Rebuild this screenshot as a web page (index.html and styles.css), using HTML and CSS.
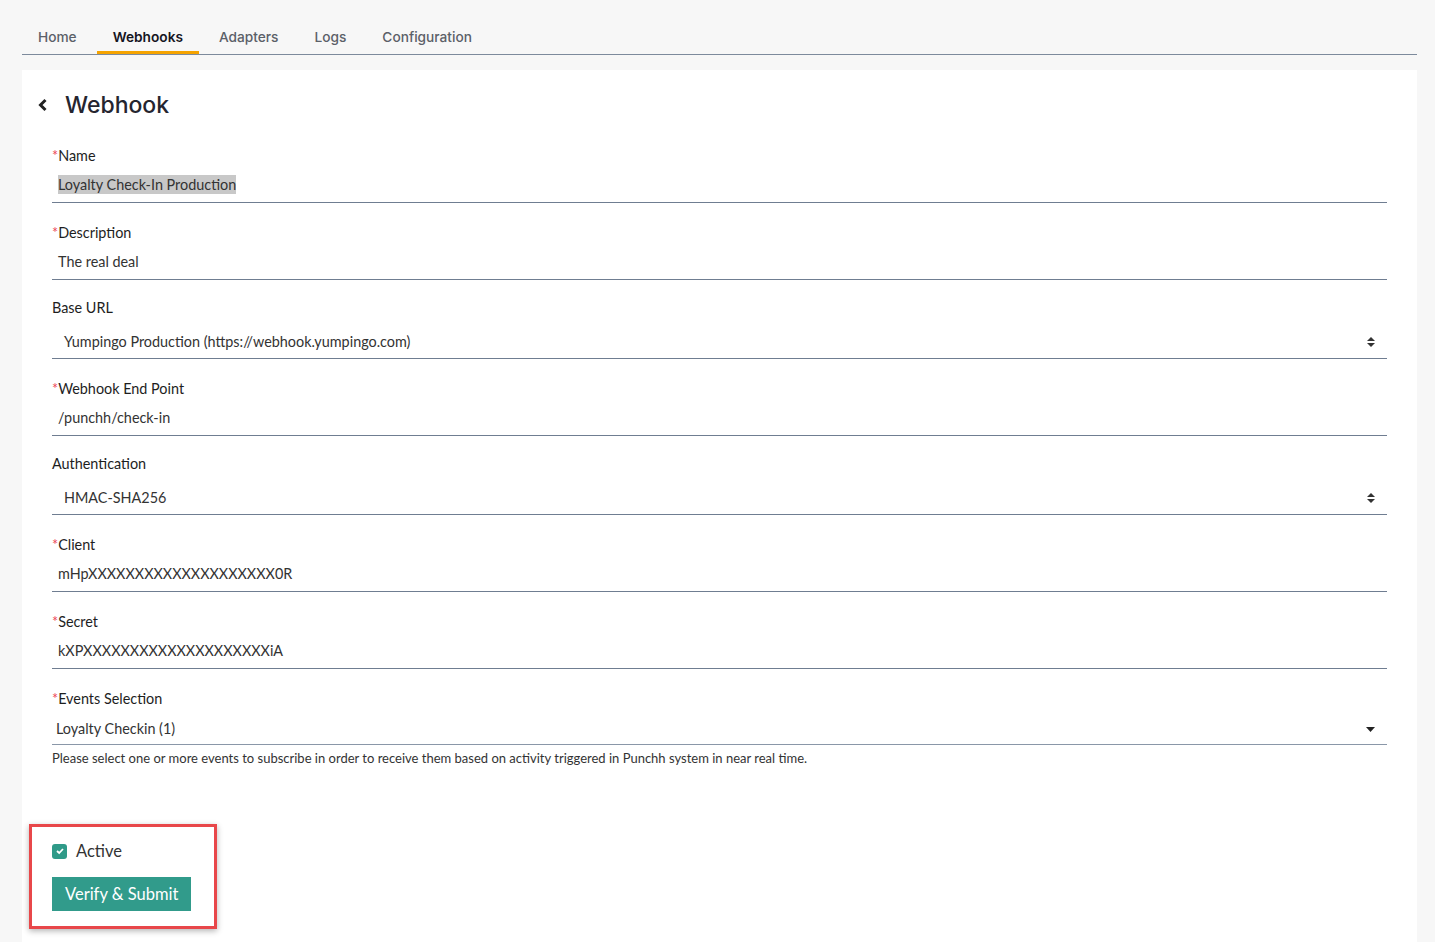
FILE: index.html
```html
<!DOCTYPE html>
<html lang="en">
<head>
    <meta charset="UTF-8">
    <meta name="viewport" content="width=device-width, initial-scale=1.0">
    <title>Webhook</title>
    <link rel="stylesheet" href="styles.css">
</head>
<body>
    <nav class="tabs">
        <a class="tab">Home</a>
        <a class="tab active">Webhooks</a>
        <a class="tab">Adapters</a>
        <a class="tab">Logs</a>
        <a class="tab">Configuration</a>
    </nav>

    <div class="card">
        <div class="page-title">
            <svg class="back" width="10" height="14" viewBox="0 0 10 14">
                <polyline points="7.5,2 2.5,7 7.5,12" fill="none" stroke="#222" stroke-width="3"/>
            </svg>
            <h1>Webhook</h1>
        </div>

        <div class="field">
            <label><span class="req">*</span>Name</label>
            <div class="input"><span class="selected">Loyalty Check-In Production</span></div>
        </div>

        <div class="field">
            <label><span class="req">*</span>Description</label>
            <div class="input">The real deal</div>
        </div>

        <div class="field select-field">
            <label>Base URL</label>
            <div class="select">
                <span>Yumpingo Production (https://webhook.yumpingo.com)</span>
                <svg width="8" height="10" viewBox="0 0 8 10"><path d="M4 0L8 4H0Z M4 10L8 6H0Z" fill="#333"/></svg>
            </div>
        </div>

        <div class="field">
            <label><span class="req">*</span>Webhook End Point</label>
            <div class="input">/punchh/check-in</div>
        </div>

        <div class="field select-field">
            <label>Authentication</label>
            <div class="select">
                <span>HMAC-SHA256</span>
                <svg width="8" height="10" viewBox="0 0 8 10"><path d="M4 0L8 4H0Z M4 10L8 6H0Z" fill="#333"/></svg>
            </div>
        </div>

        <div class="field">
            <label><span class="req">*</span>Client</label>
            <div class="input">mHpXXXXXXXXXXXXXXXXXXXX0R</div>
        </div>

        <div class="field">
            <label><span class="req">*</span>Secret</label>
            <div class="input">kXPXXXXXXXXXXXXXXXXXXXXiA</div>
        </div>

        <div class="field events">
            <label><span class="req">*</span>Events Selection</label>
            <div class="multi">
                <span>Loyalty Checkin (1)</span>
                <svg width="9" height="5" viewBox="0 0 9 5"><path d="M0 0H9L4.5 5Z" fill="#222"/></svg>
            </div>
            <p class="help">Please select one or more events to subscribe in order to receive them based on activity triggered in Punchh system in near real time.</p>
        </div>

        <div class="highlight">
            <div class="check-row">
                <span class="checkbox">
                    <svg width="10" height="8" viewBox="0 0 10 8"><polyline points="2,4 4.2,6 8,2" fill="none" stroke="#fff" stroke-width="1.8"/></svg>
                </span>
                <span>Active</span>
            </div>
            <button class="submit">Verify &amp; Submit</button>
        </div>
    </div>
</body>
</html>
```

FILE: styles.css
```css
body {
    margin: 0;
    background: #f7f7f7;
    font-family: Lato, "Noto Sans", sans-serif;
    color: #222;
    height: 100vh;
    display: flex;
    flex-direction: column;
    overflow: hidden;
}
.tabs {
    display: flex;
    gap: 4px;
    margin: 20px 18px 0 22px;
    border-bottom: 1px solid #7d8a9c;
}
.tab {
    padding: 7px 16px 4px;
    border-bottom: 3px solid transparent;
    font-family: Inter, sans-serif;
    font-size: 13.7px;
    font-weight: 500;
    line-height: 20px;
    color: #5b6068;
    cursor: pointer;
}
.tab.active {
    color: #15151f;
    font-weight: 600;
    border-bottom-color: #f5a300;
}
.card {
    flex: 1;
    background: white;
    margin: 15px 18px 0 22px;
    padding: 20px 30px 0 30px;
}
.page-title {
    display: flex;
    align-items: center;
    margin-bottom: 26px;
}
.back {
    margin-left: -14px;
    margin-right: 17px;
}
.page-title h1 {
    margin: 0;
    font-family: Inter, sans-serif;
    font-size: 23px;
    font-weight: 500;
    line-height: 30px;
    color: #25252f;
}
.field {
    margin-bottom: 20px;
}
.select-field {
    margin-top: -2px;
}
.field label {
    display: block;
    font-size: 14.4px;
    line-height: 20px;
    color: #1e1e1e;
}
.req {
    color: #ec4657;
}
.input {
    padding: 9px 6px 7px;
    font-size: 14.4px;
    line-height: 20px;
    color: #333;
    border-bottom: 1px solid #6f7d91;
}
.selected {
    background: #c8c8c8;
    padding: 1px 0;
}
.select {
    display: flex;
    justify-content: space-between;
    align-items: center;
    padding: 14px 12px 6px 12px;
    font-size: 14.4px;
    line-height: 20px;
    color: #333;
    border-bottom: 1px solid #6f7d91;
}
.multi {
    display: flex;
    justify-content: space-between;
    align-items: center;
    padding: 10px 12px 5px 4px;
    font-size: 14.4px;
    line-height: 20px;
    color: #333;
    border-bottom: 1px solid #8a97a8;
}
.help {
    margin: 5px 0 0;
    font-size: 13px;
    line-height: 16px;
    color: #333;
}
.events {
    margin-bottom: 58px;
}
.highlight {
    align-self: flex-start;
    display: inline-block;
    margin-left: -23px;
    padding: 14px 23px 15px 20px;
    border: 3px solid #e8474a;
    box-shadow: 0 2px 6px rgba(0,0,0,0.3);
}
.check-row {
    display: flex;
    align-items: center;
    gap: 9px;
    font-size: 16.5px;
    line-height: 20px;
    color: #333;
}
.checkbox {
    width: 15px;
    height: 15px;
    border-radius: 3px;
    background: #2f9a88;
    display: flex;
    align-items: center;
    justify-content: center;
}
.submit {
    display: block;
    margin-top: 16px;
    height: 34px;
    padding: 0 13px;
    border: none;
    background: #319b8b;
    color: white;
    font-family: Lato, "Noto Sans", sans-serif;
    font-size: 16.5px;
    cursor: pointer;
}
```
